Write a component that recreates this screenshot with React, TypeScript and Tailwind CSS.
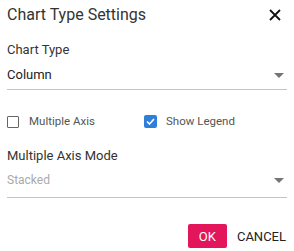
import React from "react";

const Caret = () => (
    <svg width="10" height="5" viewBox="0 0 10 5" className="shrink-0">
        <path d="M0 0 L10 0 L5 5 Z" fill="#757575" />
    </svg>
);

const App: React.FC = () => {
    return (
        <div
            className="w-[294px] h-[251px] bg-white flex flex-col px-[7px] text-[#212121]"
            style={{ fontFamily: "Roboto, sans-serif" }}
        >
            {/* Cabecera */}
            <div className="flex items-center justify-between h-[27px] mt-[1px]">
                <span className="text-[16px] text-[#333]">Chart Type Settings</span>
                <svg width="12" height="12" viewBox="0 0 12 12" className="mr-[6px]">
                    <path d="M1 1 L11 11 M11 1 L1 11" stroke="#111" strokeWidth="1.8" />
                </svg>
            </div>

            {/* Tipo de gráfico */}
            <div className="mt-[13px] text-[13px] leading-[18px] text-[#333]">Chart Type</div>
            <div className="mt-[6px] flex items-center justify-between h-[20px] border-b border-[#c4c4c4] pb-[4px] box-content">
                <span className="text-[13px] text-[#222]">Column</span>
                <span className="mr-[3px]"><Caret /></span>
            </div>

            {/* Casillas */}
            <div className="mt-[23px] flex items-center text-[11.5px] text-[#555]">
                <div className="flex items-center w-[137px]">
                    <span className="w-[12px] h-[12px] border border-[#666] rounded-[1px]" />
                    <span className="ml-[10px]">Multiple Axis</span>
                </div>
                <div className="flex items-center">
                    <span className="w-[13px] h-[13px] rounded-[2px] bg-[#2f7fd8] flex items-center justify-center">
                        <svg width="9" height="7" viewBox="0 0 9 7">
                            <path d="M1 3.5 L3.5 6 L8 1" stroke="#fff" strokeWidth="1.6" fill="none" />
                        </svg>
                    </span>
                    <span className="ml-[9px]">Show Legend</span>
                </div>
            </div>

            {/* Modo de ejes */}
            <div className="mt-[17px] text-[13px] leading-[18px] text-[#333]">Multiple Axis Mode</div>
            <div className="mt-[5px] flex items-center justify-between h-[20px] border-b border-[#c4c4c4] pb-[7px] box-content">
                <span className="text-[12px] text-[#aaa]">Stacked</span>
                <span className="mr-[3px]"><Caret /></span>
            </div>

            {/* Botones */}
            <div className="mt-[26px] flex justify-end items-center gap-[10px]">
                <button className="w-[39px] h-[24px] bg-[#e3165b] text-white text-[13px] rounded-[2px]">OK</button>
                <button className="h-[24px] text-[13px] text-[#222] pr-[1px]">CANCEL</button>
            </div>
        </div>
    );
};

export default App;
